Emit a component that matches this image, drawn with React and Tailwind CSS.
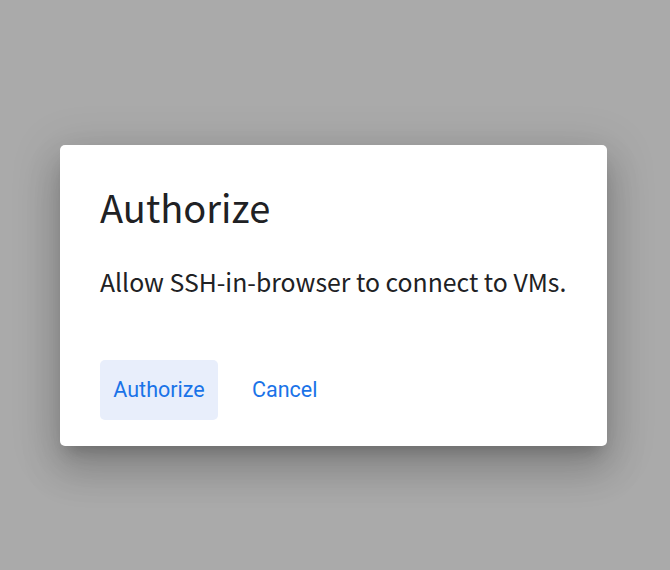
export default function App() {
  return (
    <div className="h-[570px] w-[670px] overflow-hidden bg-[#aaaaaa] pt-[145px] pl-[60px]">
      <div
        className="w-[547px] h-[301px] rounded-[5px] bg-white px-[40px] pt-[38px] flex flex-col shadow-[0_11px_15px_-7px_rgba(0,0,0,0.2),0_24px_38px_3px_rgba(0,0,0,0.14),0_9px_46px_8px_rgba(0,0,0,0.12)]"
      >
        <h1 className="text-[38px] leading-[48px] text-[#202124] font-['Noto_Sans_CJK_KR',sans-serif]">
          Authorize
        </h1>
        <p className="mt-[34px] text-[24.8px] leading-[32px] text-[#202124] font-['Noto_Sans_CJK_KR',sans-serif]">
          Allow SSH-in-browser to connect to VMs.
        </p>
        <div className="mt-[63px] flex items-center gap-[12px] font-['Roboto',sans-serif]">
          <button className="h-[60px] w-[118px] rounded-[5px] bg-[#e8eefb] text-[21.5px] text-[#1a73e8]">
            Authorize
          </button>
          <button className="h-[60px] px-[22px] rounded-[5px] text-[21.5px] text-[#1a73e8]">
            Cancel
          </button>
        </div>
      </div>
    </div>
  );
}
